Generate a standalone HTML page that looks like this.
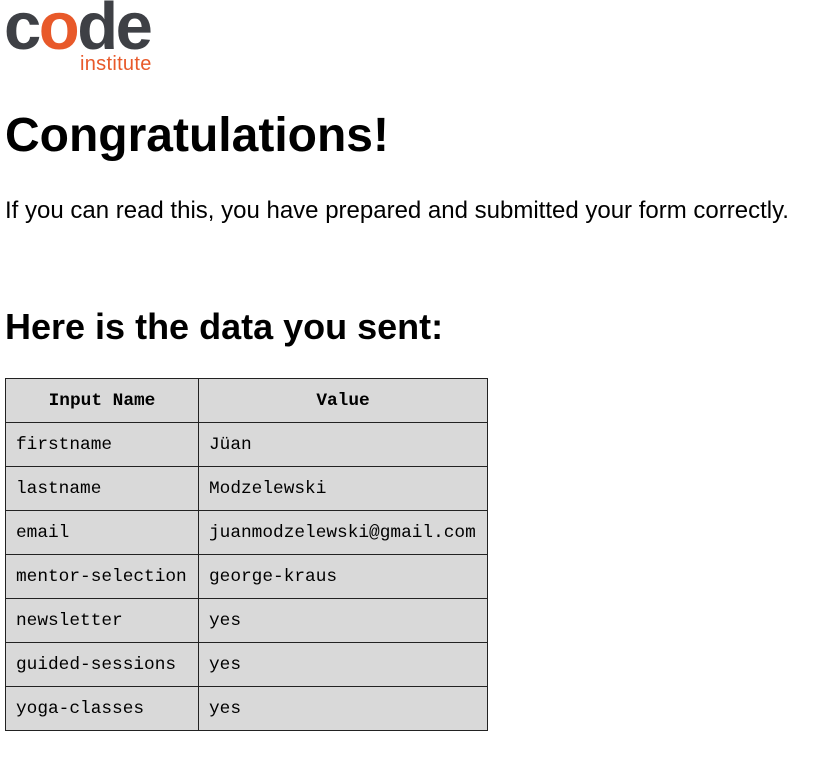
<!DOCTYPE html>
<html><head><meta charset="utf-8"><style>
body{margin:0;background:#fff;font-family:"Liberation Sans",Arial,sans-serif;color:#000;width:830px;height:760px;overflow:hidden;position:relative}
.abs{position:absolute;white-space:nowrap}
.logo{left:4px;top:-14px;font-size:67px;font-weight:bold;color:#3e4045;letter-spacing:-2.5px;line-height:82px}
.logo span{color:#e8592a}
.inst{left:80px;top:53px;font-size:20px;color:#e8592a;letter-spacing:0.3px;line-height:22px}
h1{position:absolute;left:5px;top:106px;margin:0;font-size:48px;line-height:60px}
p{position:absolute;left:5px;top:197px;margin:0;font-size:24px;line-height:28px}
h2{position:absolute;left:5px;top:305px;margin:0;font-size:36px;line-height:44px}
table{position:absolute;left:5px;top:378px;border-collapse:collapse;background:#d9d9d9;font-family:"Liberation Mono",Consolas,monospace;font-size:17.8px}
td,th{border:1px solid #222;height:43px;padding:0 10px;text-align:left}
th{text-align:center;font-weight:bold}
td:first-child,th:first-child{width:172px}
td:last-child,th:last-child{width:268px}
</style></head><body>
<div class="abs logo">c<span>o</span>de</div>
<div class="abs inst">institute</div>
<h1>Congratulations!</h1>
<p>If you can read this, you have prepared and submitted your form correctly.</p>
<h2>Here is the data you sent:</h2>
<table>
<tr><th>Input Name</th><th>Value</th></tr>
<tr><td>firstname</td><td>Jüan</td></tr>
<tr><td>lastname</td><td>Modzelewski</td></tr>
<tr><td>email</td><td>juanmodzelewski@gmail.com</td></tr>
<tr><td>mentor-selection</td><td>george-kraus</td></tr>
<tr><td>newsletter</td><td>yes</td></tr>
<tr><td>guided-sessions</td><td>yes</td></tr>
<tr><td>yoga-classes</td><td>yes</td></tr>
</table>
</body></html>
